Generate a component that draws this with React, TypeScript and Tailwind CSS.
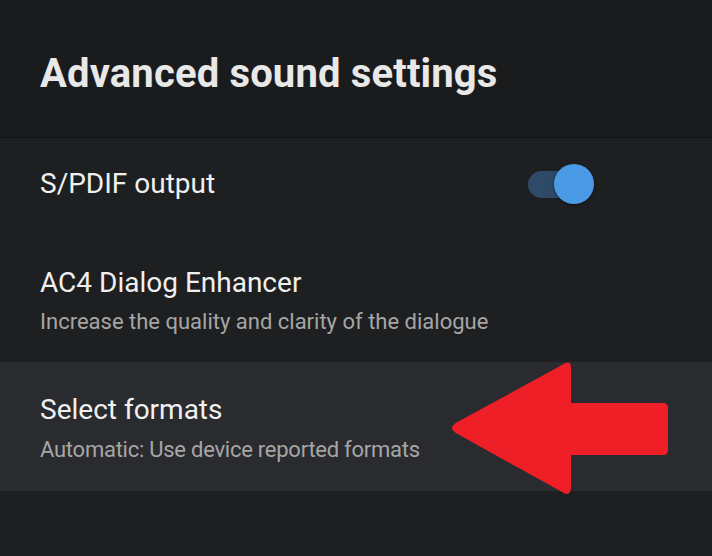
import React from "react";

export default function App() {
  return (
    <div
      className="w-[712px] h-[556px] overflow-hidden bg-[#1e1f21] relative"
      style={{ fontFamily: "Roboto, 'Liberation Sans', sans-serif" }}
    >
      <div className="h-[138px] bg-[#1a1b1d] border-b border-[#131415] pt-[54px] pl-[40px]">
        <h1 className="text-[40px] font-bold text-[#e8e8e8] leading-none tracking-[0.15px]">
          Advanced sound settings
        </h1>
      </div>

      <div className="h-[92px] flex items-center pl-[40px] pr-[118px] justify-between">
        <span className="text-[28px] text-[#f0f0f0] leading-none">S/PDIF output</span>
        <div className="relative w-[66px] h-[40px] flex items-center">
          <div className="w-[50px] h-[27px] rounded-full bg-[#2e4a66]" />
          <div className="absolute right-0 top-0 w-[40px] h-[40px] rounded-full bg-[#4a9ae6] shadow-[0_1px_3px_rgba(0,0,0,0.5)]" />
        </div>
      </div>

      <div className="h-[132px] flex flex-col pt-[39px] pl-[40px]">
        <span className="text-[28px] text-[#f0f0f0] leading-none">AC4 Dialog Enhancer</span>
        <span className="text-[22px] text-[#a6a6a6] leading-none mt-[14px]">
          Increase the quality and clarity of the dialogue
        </span>
      </div>

      <div className="h-[129px] bg-[#2a2b2e] flex flex-col pt-[34px] pl-[40px]">
        <span className="text-[28px] text-[#f0f0f0] leading-none">Select formats</span>
        <span className="text-[22px] text-[#a6a6a6] leading-none mt-[15px] tracking-[-0.25px]">
          Automatic: Use device reported formats
        </span>
      </div>

      <svg
        className="absolute left-[448px] top-[360px]"
        width="224"
        height="138"
        viewBox="448 360 224 138"
      >
        <path
          d="M 566 364 Q 570 362 570 368 L 570 404 L 663 404 Q 667 404 667 408 L 667 450 Q 667 454 663 454 L 570 454 L 570 488 Q 570 495 564 492 L 456 432 Q 450 428 456 424 Z"
          fill="#ee1f27"
          stroke="#ee1f27"
          strokeLinejoin="round"
          strokeWidth="2"
        />
      </svg>
    </div>
  );
}
